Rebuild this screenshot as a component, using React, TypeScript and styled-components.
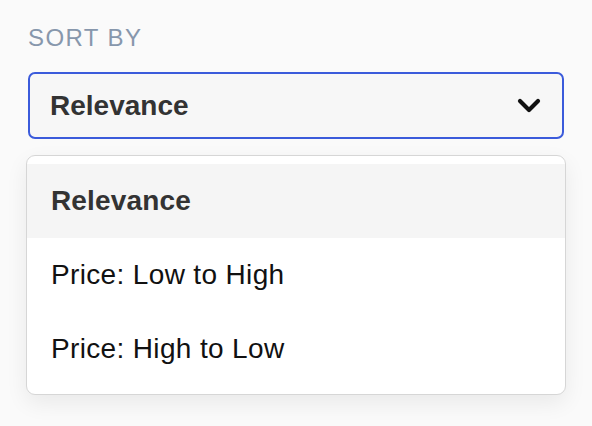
import React from "react";
import styled, { createGlobalStyle } from "styled-components";

const Global = createGlobalStyle`
  html, body { margin: 0; padding: 0; background: #fafafa; }
  body { font-family: "Liberation Sans", Arial, sans-serif; }
  * { box-sizing: border-box; }
`;

const Page = styled.div`
  width: 592px;
  height: 426px;
  padding: 22px 27px 0 26px;
  display: flex;
  flex-direction: column;
  background: #fafafa;
`;

const Label = styled.div`
  margin-left: 2px;
  font-size: 24px;
  line-height: 32px;
  letter-spacing: 1.4px;
  color: #8797ac;
  text-transform: uppercase;
`;

const SelectBox = styled.div`
  margin: 18px 1px 0 2px;
  height: 67px;
  border: 2px solid #3b5bdb;
  border-radius: 7px;
  background: #f7f7f7;
  display: flex;
  align-items: center;
  justify-content: space-between;
  padding: 0 21px 0 20px;
`;

const SelectValue = styled.span`
  font-size: 28px;
  font-weight: 700;
  color: #333333;
  line-height: 32px;
`;

const Menu = styled.div`
  margin-top: 16px;
  width: 540px;
  border: 1px solid #d6d6d6;
  border-radius: 9px;
  background: #ffffff;
  padding: 8px 0;
  display: flex;
  flex-direction: column;
  box-shadow: 0 8px 22px rgba(0, 0, 0, 0.07);
`;

const Option = styled.div<{ $active?: boolean }>`
  height: 74px;
  display: flex;
  align-items: center;
  padding-left: 24px;
  font-size: 28px;
  line-height: 32px;
  letter-spacing: ${(p) => (p.$active ? "0.15px" : "0.35px")};
  background: ${(p) => (p.$active ? "#f5f5f5" : "transparent")};
  font-weight: ${(p) => (p.$active ? 700 : 400)};
  color: ${(p) => (p.$active ? "#333333" : "#111111")};
`;

const Chevron = () => (
  <svg width="24" height="16" viewBox="0 0 24 16" fill="none">
    <path
      d="M3 3 L12 12 L21 3"
      stroke="#111"
      strokeWidth="4.2"
      strokeLinecap="round"
      strokeLinejoin="round"
    />
  </svg>
);

const options = ["Relevance", "Price: Low to High", "Price: High to Low"];

export default function App() {
  return (
    <>
      <Global />
      <Page>
        <Label>Sort by</Label>
        <SelectBox>
          <SelectValue>Relevance</SelectValue>
          <Chevron />
        </SelectBox>
        <Menu>
          {options.map((o, i) => (
            <Option key={o} $active={i === 0}>
              {o}
            </Option>
          ))}
        </Menu>
      </Page>
    </>
  );
}
